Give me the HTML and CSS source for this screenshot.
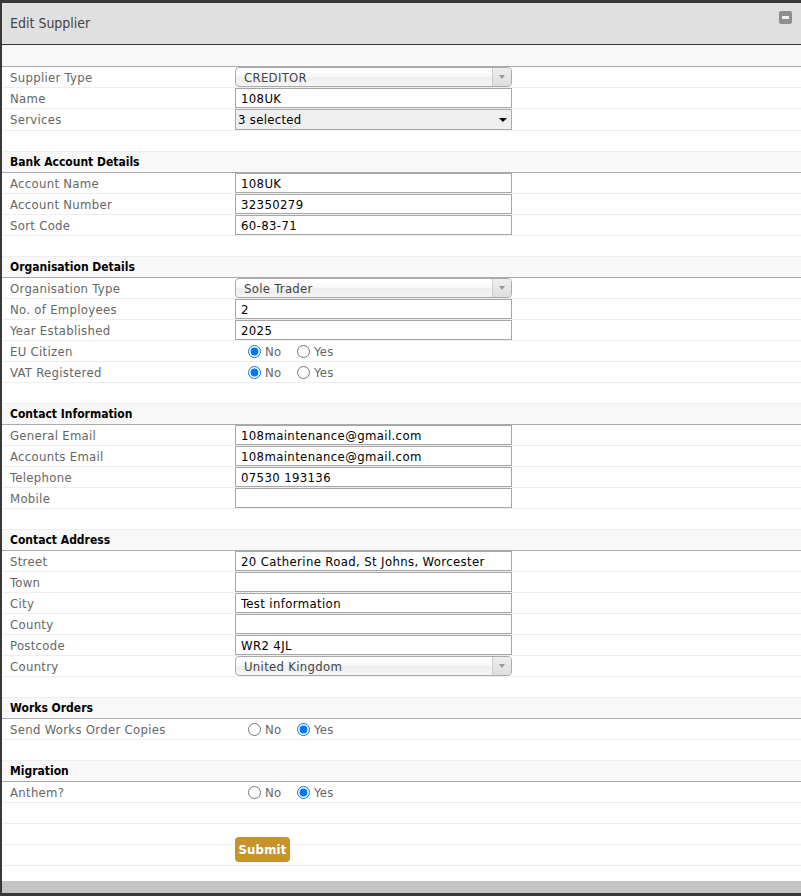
FILE: index.html
```html
<!DOCTYPE html>
<html lang="en">
<head>
    <meta charset="UTF-8">
    <title>Edit Supplier</title>
    <link rel="stylesheet" href="styles.css">
</head>
<body>
    <div class="panel">
        <div class="panel-head">
            <h1 class="panel-title">Edit Supplier</h1>
            <span class="collapse-btn"></span>
        </div>

        <form class="supplier-form" id="supplierForm">
            <!-- General -->
            <div class="section-head top"></div>
            <div class="row">
                <label class="lbl">Supplier Type</label>
                <div class="chosen"><span>CREDITOR</span><span class="chosen-arrow"></span></div>
            </div>
            <div class="row">
                <label class="lbl" for="name">Name</label>
                <input class="text-input" type="text" id="name" value="108UK">
            </div>
            <div class="row tall">
                <label class="lbl">Services</label>
                <div class="multi"><span>3 selected</span><span class="multi-arrow"></span></div>
            </div>
            <div class="row"></div>

            <!-- Bank Account Details -->
            <div class="section-head">Bank Account Details</div>
            <div class="row">
                <label class="lbl" for="accName">Account Name</label>
                <input class="text-input" type="text" id="accName" value="108UK">
            </div>
            <div class="row">
                <label class="lbl" for="accNumber">Account Number</label>
                <input class="text-input" type="text" id="accNumber" value="32350279">
            </div>
            <div class="row">
                <label class="lbl" for="sortCode">Sort Code</label>
                <input class="text-input" type="text" id="sortCode" value="60-83-71">
            </div>
            <div class="row"></div>

            <!-- Organisation Details -->
            <div class="section-head">Organisation Details</div>
            <div class="row">
                <label class="lbl">Organisation Type</label>
                <div class="chosen"><span>Sole Trader</span><span class="chosen-arrow"></span></div>
            </div>
            <div class="row">
                <label class="lbl" for="employees">No. of Employees</label>
                <input class="text-input" type="text" id="employees" value="2">
            </div>
            <div class="row">
                <label class="lbl" for="established">Year Established</label>
                <input class="text-input" type="text" id="established" value="2025">
            </div>
            <div class="row">
                <label class="lbl">EU Citizen</label>
                <div class="radios">
                    <label class="opt"><input type="radio" name="eu" checked>No</label>
                    <label class="opt"><input type="radio" name="eu">Yes</label>
                </div>
            </div>
            <div class="row">
                <label class="lbl">VAT Registered</label>
                <div class="radios">
                    <label class="opt"><input type="radio" name="vat" checked>No</label>
                    <label class="opt"><input type="radio" name="vat">Yes</label>
                </div>
            </div>
            <div class="row"></div>

            <!-- Contact Information -->
            <div class="section-head">Contact Information</div>
            <div class="row">
                <label class="lbl" for="generalEmail">General Email</label>
                <input class="text-input" type="text" id="generalEmail" value="108maintenance@gmail.com">
            </div>
            <div class="row">
                <label class="lbl" for="accountsEmail">Accounts Email</label>
                <input class="text-input" type="text" id="accountsEmail" value="108maintenance@gmail.com">
            </div>
            <div class="row">
                <label class="lbl" for="telephone">Telephone</label>
                <input class="text-input" type="text" id="telephone" value="07530 193136">
            </div>
            <div class="row">
                <label class="lbl" for="mobile">Mobile</label>
                <input class="text-input" type="text" id="mobile" value="">
            </div>
            <div class="row"></div>

            <!-- Contact Address -->
            <div class="section-head">Contact Address</div>
            <div class="row">
                <label class="lbl" for="street">Street</label>
                <input class="text-input" type="text" id="street" value="20 Catherine Road, St Johns, Worcester">
            </div>
            <div class="row">
                <label class="lbl" for="town">Town</label>
                <input class="text-input" type="text" id="town" value="">
            </div>
            <div class="row">
                <label class="lbl" for="city">City</label>
                <input class="text-input" type="text" id="city" value="Test information">
            </div>
            <div class="row">
                <label class="lbl" for="county">County</label>
                <input class="text-input" type="text" id="county" value="">
            </div>
            <div class="row">
                <label class="lbl" for="postcode">Postcode</label>
                <input class="text-input" type="text" id="postcode" value="WR2 4JL">
            </div>
            <div class="row">
                <label class="lbl">Country</label>
                <div class="chosen"><span>United Kingdom</span><span class="chosen-arrow"></span></div>
            </div>
            <div class="row"></div>

            <!-- Works Orders -->
            <div class="section-head">Works Orders</div>
            <div class="row">
                <label class="lbl">Send Works Order Copies</label>
                <div class="radios">
                    <label class="opt"><input type="radio" name="woCopies">No</label>
                    <label class="opt"><input type="radio" name="woCopies" checked>Yes</label>
                </div>
            </div>
            <div class="row"></div>

            <!-- Migration -->
            <div class="section-head">Migration</div>
            <div class="row">
                <label class="lbl">Anthem?</label>
                <div class="radios">
                    <label class="opt"><input type="radio" name="anthem">No</label>
                    <label class="opt"><input type="radio" name="anthem" checked>Yes</label>
                </div>
            </div>
            <div class="row"></div>
            <div class="row"></div>
            <div class="row submit-row">
                <span></span>
                <button type="submit" class="submit-btn">Submit</button>
            </div>
        </form>

        <div class="panel-foot"></div>
    </div>
</body>
</html>
```

FILE: styles.css
```css
body {
    margin: 0;
    padding: 3px 0 0 2px;
    background-color: #383838;
    font-family: "DejaVu Sans Condensed", "DejaVu Sans", sans-serif;
    font-stretch: condensed;
    font-size: 13px;
    color: #333;
}
.panel {
    background-color: #fff;
}
.panel-head {
    height: 41px;
    background-color: #e0e0e0;
    border-bottom: 1px solid #333;
    display: flex;
    align-items: center;
    justify-content: space-between;
    padding: 0 9px 0 8px;
}
.panel-title {
    margin: 0 0 2px;
    font-size: 14px;
    font-weight: normal;
    color: #444;
}
.collapse-btn {
    align-self: flex-start;
    margin-top: 8px;
    width: 13px;
    height: 13px;
    border-radius: 2px;
    background-color: #8e8e8e;
    display: flex;
    align-items: center;
    justify-content: center;
}
.collapse-btn::after {
    content: "";
    width: 7px;
    height: 3px;
    background-color: #eee;
}

/* form rows */
.section-head {
    height: 20px;
    line-height: 20px;
    padding-left: 8px;
    background-color: #f8f8f8;
    border-bottom: 1px solid #aaa;
    font-size: 12px;
    font-weight: bold;
    color: #000;
}
.section-head.top {
    height: 21px;
}
.row {
    display: grid;
    grid-template-columns: 233px 1fr;
    align-items: center;
    height: 20px;
    border-bottom: 1px solid #eee;
}
.row.tall {
    height: 21px;
}
.lbl {
    padding-left: 8px;
    color: #666;
    letter-spacing: 0.3px;
    white-space: nowrap;
}
.text-input {
    box-sizing: border-box;
    display: block;
    width: 277px;
    height: 20px;
    margin: 0;
    padding: 0 5px;
    border: 1px solid #a6a6a6;
    font: inherit;
    letter-spacing: 0.37px;
    color: #000;
    background-color: #fff;
    outline: none;
}

/* styled dropdowns */
.chosen {
    box-sizing: border-box;
    width: 277px;
    height: 20px;
    display: flex;
    align-items: center;
    padding-left: 8px;
    border: 1px solid #aaa;
    border-radius: 4px;
    background: linear-gradient(#fff 20%, #f6f6f6 50%, #eee 52%, #f4f4f4);
    color: #444;
    letter-spacing: 0.3px;
    overflow: hidden;
}
.chosen-arrow {
    margin-left: auto;
    width: 18px;
    height: 100%;
    border-left: 1px solid #ccc;
    background: linear-gradient(#eee, #dedede);
    display: flex;
    align-items: center;
    justify-content: center;
}
.chosen-arrow::after {
    content: "";
    border-left: 3px solid transparent;
    border-right: 3px solid transparent;
    border-top: 4px solid #999;
}
.multi {
    box-sizing: border-box;
    width: 277px;
    height: 21px;
    display: flex;
    align-items: center;
    padding: 0 4px 0 2px;
    border: 1px solid #aaa;
    background-color: #efefef;
    color: #000;
    letter-spacing: 0.3px;
}
.multi-arrow {
    margin-left: auto;
    border-left: 4px solid transparent;
    border-right: 4px solid transparent;
    border-top: 4px solid #000;
}

/* yes / no options */
.radios {
    display: flex;
    align-items: center;
    padding-left: 13px;
    color: #666;
    letter-spacing: 0.3px;
}
.opt {
    display: flex;
    align-items: center;
    width: 49px;
}
.opt input {
    width: 13px;
    height: 13px;
    margin: 0 4px 0 0;
}

.submit-row {
    align-items: start;
}
.submit-btn {
    width: 55px;
    height: 25px;
    margin-top: -8px;
    padding: 0;
    border: none;
    border-radius: 4px;
    background-color: #c6932f;
    color: #fff;
    font: inherit;
    font-weight: bold;
    letter-spacing: 0.2px;
    cursor: pointer;
}
.panel-foot {
    height: 12px;
    margin-top: 15px;
    background-color: #c4c4c4;
}
```
